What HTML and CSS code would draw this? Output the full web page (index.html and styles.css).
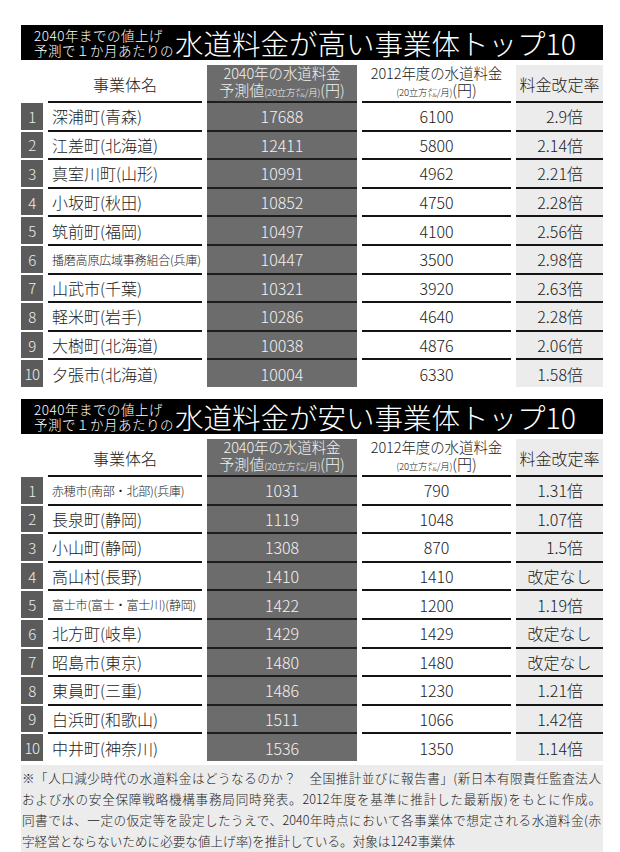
FILE: index.html
```html
<!DOCTYPE html>
<html lang="ja">
<head>
<meta charset="utf-8">
<title>水道料金 事業体トップ10</title>
<link rel="stylesheet" href="styles.css">
</head>
<body>
<div class="page">
  <section class="block">
    <h2 class="title"><span class="sub">2040年までの値上げ<br>予測で１か月あたりの</span><span class="main">水道料金が高い事業体トップ10</span></h2>
    <div class="table">
      <div class="h h-no"></div>
      <div class="h h-name">事業体名</div>
      <div class="h h-40"><span class="l1">2040年の水道料金</span><span class="l2">予測値<small>(20立方㍍/月)</small>(円)</span></div>
      <div class="h h-12"><span class="l1">2012年度の水道料金</span><span class="l2"><small>(20立方㍍/月)</small>(円)</span></div>
      <div class="h h-rate">料金改定率</div>

      <div class="c no">1</div><div class="c name">深浦町(青森)</div><div class="c v40">17688</div><div class="c v12">6100</div><div class="c rate">2.9倍</div>
      <div class="c no">2</div><div class="c name">江差町(北海道)</div><div class="c v40">12411</div><div class="c v12">5800</div><div class="c rate">2.14倍</div>
      <div class="c no">3</div><div class="c name">真室川町(山形)</div><div class="c v40">10991</div><div class="c v12">4962</div><div class="c rate">2.21倍</div>
      <div class="c no">4</div><div class="c name">小坂町(秋田)</div><div class="c v40">10852</div><div class="c v12">4750</div><div class="c rate">2.28倍</div>
      <div class="c no">5</div><div class="c name">筑前町(福岡)</div><div class="c v40">10497</div><div class="c v12">4100</div><div class="c rate">2.56倍</div>
      <div class="c no">6</div><div class="c name sm">播磨高原広域事務組合(兵庫)</div><div class="c v40">10447</div><div class="c v12">3500</div><div class="c rate">2.98倍</div>
      <div class="c no">7</div><div class="c name">山武市(千葉)</div><div class="c v40">10321</div><div class="c v12">3920</div><div class="c rate">2.63倍</div>
      <div class="c no">8</div><div class="c name">軽米町(岩手)</div><div class="c v40">10286</div><div class="c v12">4640</div><div class="c rate">2.28倍</div>
      <div class="c no">9</div><div class="c name">大樹町(北海道)</div><div class="c v40">10038</div><div class="c v12">4876</div><div class="c rate">2.06倍</div>
      <div class="c no">10</div><div class="c name">夕張市(北海道)</div><div class="c v40">10004</div><div class="c v12">6330</div><div class="c rate">1.58倍</div>
    </div>
  </section>

  <section class="block block2">
    <h2 class="title"><span class="sub">2040年までの値上げ<br>予測で１か月あたりの</span><span class="main">水道料金が安い事業体トップ10</span></h2>
    <div class="table">
      <div class="h h-no"></div>
      <div class="h h-name">事業体名</div>
      <div class="h h-40"><span class="l1">2040年の水道料金</span><span class="l2">予測値<small>(20立方㍍/月)</small>(円)</span></div>
      <div class="h h-12"><span class="l1">2012年度の水道料金</span><span class="l2"><small>(20立方㍍/月)</small>(円)</span></div>
      <div class="h h-rate">料金改定率</div>

      <div class="c no">1</div><div class="c name sm">赤穂市(南部・北部)(兵庫)</div><div class="c v40">1031</div><div class="c v12">790</div><div class="c rate">1.31倍</div>
      <div class="c no">2</div><div class="c name">長泉町(静岡)</div><div class="c v40">1119</div><div class="c v12">1048</div><div class="c rate">1.07倍</div>
      <div class="c no">3</div><div class="c name">小山町(静岡)</div><div class="c v40">1308</div><div class="c v12">870</div><div class="c rate">1.5倍</div>
      <div class="c no">4</div><div class="c name">高山村(長野)</div><div class="c v40">1410</div><div class="c v12">1410</div><div class="c rate none">改定なし</div>
      <div class="c no">5</div><div class="c name sm">富士市(富士・富士川)(静岡)</div><div class="c v40">1422</div><div class="c v12">1200</div><div class="c rate">1.19倍</div>
      <div class="c no">6</div><div class="c name">北方町(岐阜)</div><div class="c v40">1429</div><div class="c v12">1429</div><div class="c rate none">改定なし</div>
      <div class="c no">7</div><div class="c name">昭島市(東京)</div><div class="c v40">1480</div><div class="c v12">1480</div><div class="c rate none">改定なし</div>
      <div class="c no">8</div><div class="c name">東員町(三重)</div><div class="c v40">1486</div><div class="c v12">1230</div><div class="c rate">1.21倍</div>
      <div class="c no">9</div><div class="c name">白浜町(和歌山)</div><div class="c v40">1511</div><div class="c v12">1066</div><div class="c rate">1.42倍</div>
      <div class="c no">10</div><div class="c name">中井町(神奈川)</div><div class="c v40">1536</div><div class="c v12">1350</div><div class="c rate">1.14倍</div>
    </div>
  </section>

  <div class="note">
    <div class="ln">※「人口減少時代の水道料金はどうなるのか？　全国推計並びに報告書」(新日本有限責任監査法人</div>
    <div class="ln">および水の安全保障戦略機構事務局同時発表。2012年度を基準に推計した最新版)をもとに作成。</div>
    <div class="ln">同書では、一定の仮定等を設定したうえで、2040年時点において各事業体で想定される水道料金(赤</div>
    <div class="ln last">字経営とならないために必要な値上げ率)を推計している。対象は1242事業体</div>
  </div>
</div>
</body>
</html>
```

FILE: styles.css
```css
* {
  box-sizing: border-box;
}

body {
  margin: 0;
  background: #fff;
  font-family: "Noto Sans CJK JP", "Noto Sans", sans-serif;
  font-weight: 300;
  color: #1b1b1b;
}

.page {
  width: 620px;
  padding: 25px 17px 0 21px;
}

.block2 {
  margin-top: 12px;
}

.title {
  margin: 0;
  height: 35px;
  background: #000;
  color: #fff;
  font-weight: 300;
  display: flex;
  align-items: flex-end;
  padding: 0 0 2px 13px;
}

.sub {
  font-size: 13.5px;
  line-height: 15px;
  letter-spacing: 0.5px;
  white-space: nowrap;
}

.main {
  font-size: 28.5px;
  line-height: 31px;
  margin-left: 1px;
  white-space: nowrap;
}

.table {
  display: grid;
  grid-template-columns: 22px 154px 150px 149px 87px;
  grid-template-rows: 36px repeat(10, 28.6px);
  column-gap: 5px;
  margin-top: 5px;
}

.h {
  display: flex;
  flex-direction: column;
  justify-content: center;
  align-items: center;
  text-align: center;
  white-space: nowrap;
}

.h-name {
  font-size: 16px;
  padding-top: 2px;
}

.h-40 {
  background: #6c6c6c;
  color: #f2f2f2;
}

.h-rate {
  background: #ececec;
  font-size: 16px;
  padding-top: 2px;
}

.l1 {
  display: block;
  font-size: 14.5px;
  line-height: 16px;
  letter-spacing: -0.1px;
}

.l2 {
  display: block;
  font-size: 15px;
  line-height: 18px;
}

.l2 small {
  font-size: 9.5px;
  letter-spacing: -0.2px;
}

.c {
  display: flex;
  align-items: center;
  border-top: 2px solid #141414;
  font-size: 16px;
  white-space: nowrap;
}

.no {
  background: #5b5b5b;
  color: #ececec;
  border-top-color: #fff;
  justify-content: center;
  font-size: 15px;
  letter-spacing: -0.5px;
}

.name {
  padding-left: 4px;
}

.name.sm {
  font-size: 12px;
  letter-spacing: -0.2px;
}

.v40 {
  background: #6c6c6c;
  color: #f2f2f2;
  justify-content: center;
  border-top-color: #1e1e1e;
}

.v12 {
  justify-content: center;
}

.rate {
  background: #ececec;
  justify-content: flex-end;
  padding-right: 20px;
}

.rate.none {
  justify-content: center;
  padding-right: 0;
}

.note {
  margin-top: 4px;
  background: #ececec;
  padding: 2px 2px 4px 1px;
  font-size: 12.6px;
  line-height: 21px;
  color: #1e1e1e;
}

.ln {
  white-space: nowrap;
  text-align: justify;
  text-align-last: justify;
}

.ln.last {
  text-align-last: left;
}
```
